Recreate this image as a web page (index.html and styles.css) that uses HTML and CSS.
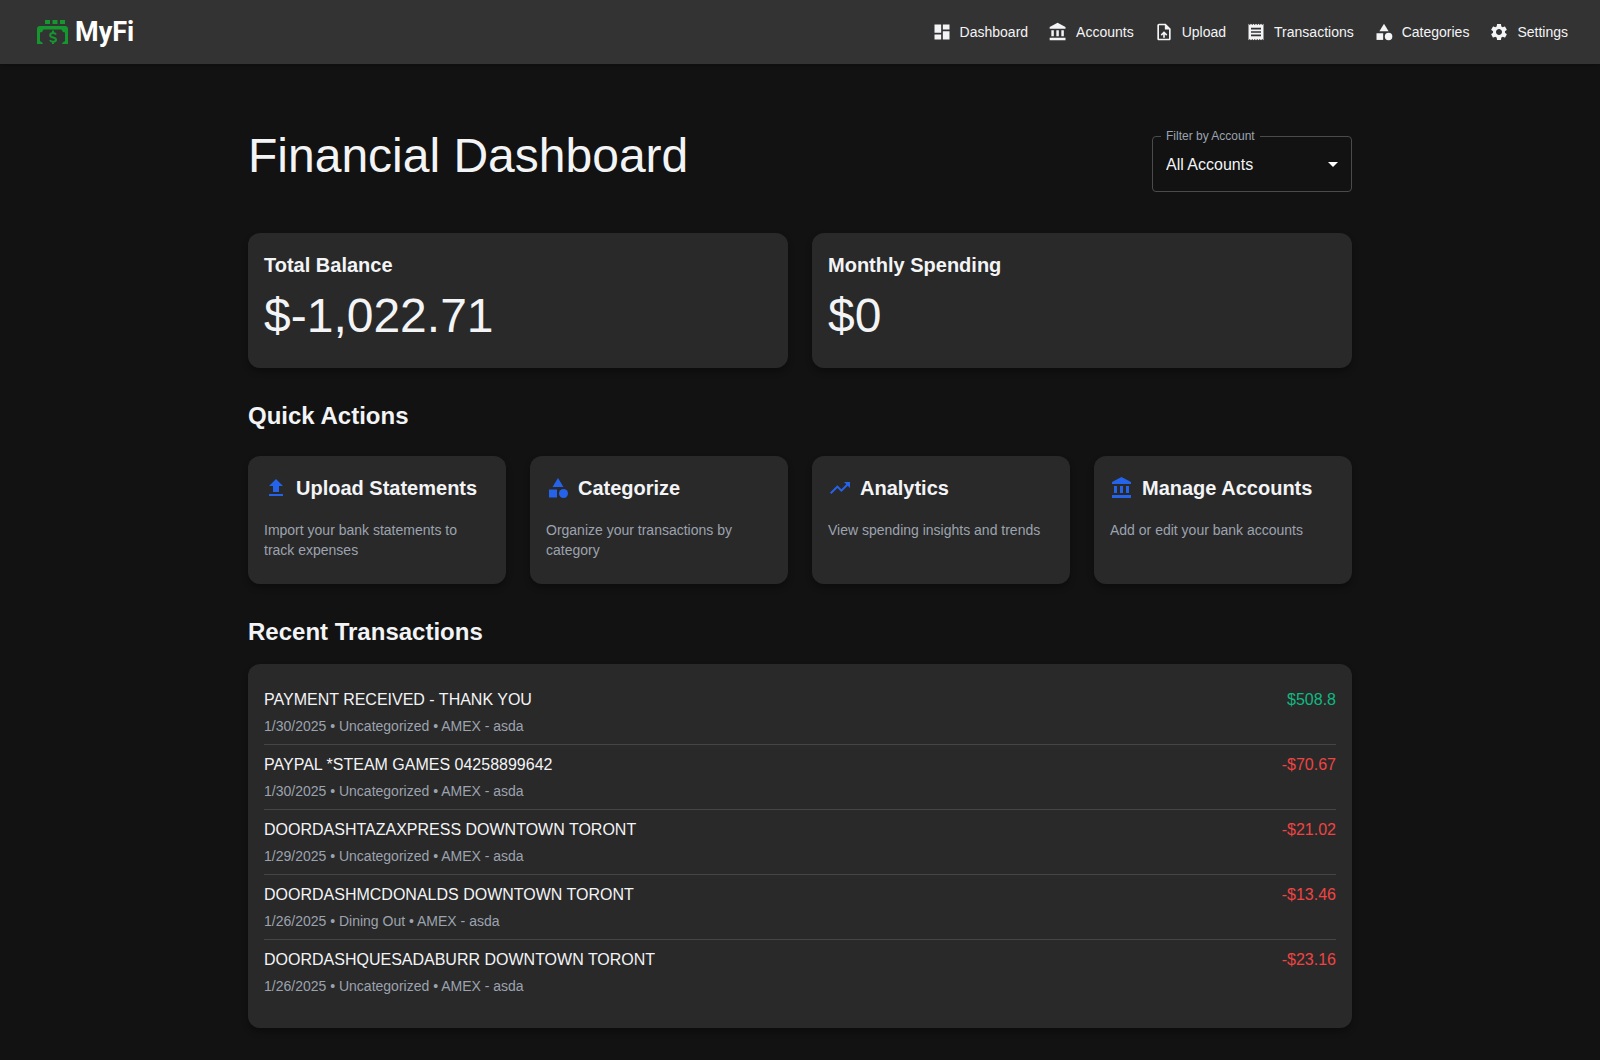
FILE: index.html
```html
<!DOCTYPE html>
<html lang="en">
<head>
<meta charset="utf-8">
<meta name="viewport" content="width=device-width, initial-scale=1">
<title>MyFi – Dashboard</title>
<link rel="stylesheet" href="styles.css">
</head>
<body>
<header class="topbar">
  <a class="logo" href="#" aria-label="MyFi home">
    <svg class="logo-mark" viewBox="0 0 32 24" aria-hidden="true">
      <path d="M8 0h5v4H8zM15.500 0h5v4h-5zM23 0h5v4h-5z"/>
      <path d="M3 6h25q3 0 3 3v15h-6q0-1.500 3-3v-8.500q-3-.5-3.500-3h-18q-.5 2.500-3.500 3V21q3 1.500 3 3H0V9q0-3 3-3z"/>
      <path class="logo-dollar" d="M19 14.500q-.8-1.400-3-1.400-2.800 0-2.800 2.100 0 1.700 2.800 2.200 3 .5 3 2.300 0 2-3 2-2.200 0-3-1.600M16 10.500v2.500M16 21.500V24"/>
    </svg>
    <span class="logo-text">MyFi</span>
  </a>
  <nav class="nav" aria-label="Main">
    <a class="nav-link" href="#"><svg class="nav-icon" viewBox="0 0 24 24" aria-hidden="true"><path d="M3 13h8V3H3v10zm0 8h8v-6H3v6zm10 0h8V11h-8v10zm0-18v6h8V3h-8z"/></svg>Dashboard</a>
    <a class="nav-link" href="#"><svg class="nav-icon" viewBox="0 0 24 24" aria-hidden="true"><path d="M4 10v7h3v-7H4zm6 0v7h3v-7h-3zM2 22h19v-3H2v3zm14-12v7h3v-7h-3zm-4.500-9L2 6v2h19V6l-9.500-5z"/></svg>Accounts</a>
    <a class="nav-link" href="#"><svg class="nav-icon" viewBox="0 0 24 24" aria-hidden="true"><path d="M14 2H6c-1.100 0-1.990.9-1.990 2L4 20c0 1.100.89 2 1.990 2H18c1.100 0 2-.9 2-2V8l-6-6zm4 18H6V4h7v5h5v11zM8 15.010l1.410 1.410L11 14.840V19h2v-4.160l1.590 1.590L16 15.010 12.010 11z"/></svg>Upload</a>
    <a class="nav-link" href="#"><svg class="nav-icon" viewBox="0 0 24 24" aria-hidden="true"><path d="M18 17H6v-2h12v2zm0-4H6v-2h12v2zm0-4H6V7h12v2zM3 22l1.500-1.500L6 22l1.500-1.500L9 22l1.500-1.500L12 22l1.500-1.500L15 22l1.500-1.500L18 22l1.500-1.500L21 22V2l-1.500 1.500L18 2l-1.500 1.500L15 2l-1.500 1.500L12 2l-1.500 1.500L9 2 7.500 3.500 6 2 4.500 3.500 3 2v20z"/></svg>Transactions</a>
    <a class="nav-link" href="#"><svg class="nav-icon" viewBox="0 0 24 24" aria-hidden="true"><path d="m12 2-5.500 9h11z"/><circle cx="17.500" cy="17.500" r="4.500"/><path d="M3 13.500h8v8H3z"/></svg>Categories</a>
    <a class="nav-link" href="#"><svg class="nav-icon" viewBox="0 0 24 24" aria-hidden="true"><path d="M19.140 12.940c.04-.3.06-.61.06-.94 0-.32-.02-.64-.07-.94l2.030-1.580c.18-.14.23-.41.12-.61l-1.920-3.320c-.12-.22-.37-.29-.59-.22l-2.390.96c-.5-.38-1.030-.7-1.620-.94l-.36-2.540c-.04-.24-.24-.41-.48-.41h-3.840c-.24 0-.43.17-.47.41l-.36 2.540c-.59.24-1.130.57-1.620.94l-2.390-.96c-.22-.08-.47 0-.59.22L2.740 8.870c-.12.21-.08.47.12.61l2.030 1.580c-.05.3-.09.63-.09.94s.02.64.07.94l-2.030 1.580c-.18.14-.23.41-.12.61l1.920 3.320c.12.22.37.29.59.22l2.390-.96c.5.38 1.030.7 1.620.94l.36 2.540c.05.24.24.41.48.41h3.840c.24 0 .44-.17.47-.41l.36-2.540c.59-.24 1.130-.56 1.620-.94l2.390.96c.22.08.47 0 .59-.22l1.920-3.320c.12-.22.07-.47-.12-.61l-2.010-1.580zM12 15.600c-1.980 0-3.600-1.620-3.600-3.600s1.620-3.600 3.600-3.600 3.600 1.620 3.600 3.600-1.620 3.600-3.600 3.600z"/></svg>Settings</a>
  </nav>
</header>

<main class="page">
  <div class="page-head">
    <h1 class="display page-title">Financial Dashboard</h1>
    <fieldset class="field">
      <legend class="field-legend"><label for="account">Filter by Account</label></legend>
      <select class="field-select" id="account"><option>All Accounts</option></select>
      <svg class="field-arrow" viewBox="0 0 24 24" aria-hidden="true"><path d="m7 10 5 5 5-5z"/></svg>
    </fieldset>
  </div>

  <section class="grid grid-two" aria-label="Summary">
    <article class="card">
      <h2 class="card-title stat-title">Total Balance</h2>
      <p class="display">$-1,022.71</p>
    </article>
    <article class="card">
      <h2 class="card-title stat-title">Monthly Spending</h2>
      <p class="display">$0</p>
    </article>
  </section>

  <h2 class="section-title actions-title">Quick Actions</h2>
  <section class="grid grid-four" aria-label="Quick Actions">
    <a class="card" href="#">
      <div class="action-head"><svg class="action-icon" viewBox="0 0 24 24" aria-hidden="true"><path d="M5 20h14v-2H5v2zm0-10h4v6h6v-6h4l-7-7-7 7z"/></svg><h3 class="card-title">Upload Statements</h3></div>
      <p class="muted">Import your bank statements to track expenses</p>
    </a>
    <a class="card" href="#">
      <div class="action-head"><svg class="action-icon" viewBox="0 0 24 24" aria-hidden="true"><path d="m12 2-5.500 9h11z"/><circle cx="17.500" cy="17.500" r="4.500"/><path d="M3 13.500h8v8H3z"/></svg><h3 class="card-title">Categorize</h3></div>
      <p class="muted">Organize your transactions by category</p>
    </a>
    <a class="card" href="#">
      <div class="action-head"><svg class="action-icon" viewBox="0 0 24 24" aria-hidden="true"><path d="m16 6 2.290 2.290-4.880 4.880-4-4L2 16.590 3.410 18l6-6 4 4 6.300-6.290L22 12V6z"/></svg><h3 class="card-title">Analytics</h3></div>
      <p class="muted">View spending insights and trends</p>
    </a>
    <a class="card" href="#">
      <div class="action-head"><svg class="action-icon" viewBox="0 0 24 24" aria-hidden="true"><path d="M4 10v7h3v-7H4zm6 0v7h3v-7h-3zM2 22h19v-3H2v3zm14-12v7h3v-7h-3zm-4.500-9L2 6v2h19V6l-9.500-5z"/></svg><h3 class="card-title">Manage Accounts</h3></div>
      <p class="muted">Add or edit your bank accounts</p>
    </a>
  </section>

  <h2 class="section-title recent-title">Recent Transactions</h2>
  <section class="card" aria-label="Recent Transactions">
    <ul class="tx-list">
      <li class="tx"><div class="tx-info"><p class="tx-name">PAYMENT RECEIVED - THANK YOU</p><p class="muted">1/30/2025 • Uncategorized • AMEX - asda</p></div><span class="amount amount-in">$508.8</span></li>
      <li class="tx"><div class="tx-info"><p class="tx-name">PAYPAL *STEAM GAMES 04258899642</p><p class="muted">1/30/2025 • Uncategorized • AMEX - asda</p></div><span class="amount">-$70.67</span></li>
      <li class="tx"><div class="tx-info"><p class="tx-name">DOORDASHTAZAXPRESS DOWNTOWN TORONT</p><p class="muted">1/29/2025 • Uncategorized • AMEX - asda</p></div><span class="amount">-$21.02</span></li>
      <li class="tx"><div class="tx-info"><p class="tx-name">DOORDASHMCDONALDS DOWNTOWN TORONT</p><p class="muted">1/26/2025 • Dining Out • AMEX - asda</p></div><span class="amount">-$13.46</span></li>
      <li class="tx"><div class="tx-info"><p class="tx-name">DOORDASHQUESADABURR DOWNTOWN TORONT</p><p class="muted">1/26/2025 • Uncategorized • AMEX - asda</p></div><span class="amount">-$23.16</span></li>
    </ul>
  </section>
</main>
</body>
</html>
```
FILE: styles.css
```css
*, *::before, *::after { box-sizing: border-box; }

body {
  margin: 0;
  background: #121212;
  color: #f3f4f6;
  font-family: "Liberation Sans", Arial, sans-serif;
  font-size: 16px;
  line-height: 24px;
}

h1, h2, h3, p, ul { margin: 0; padding: 0; }
a { color: inherit; text-decoration: none; }
svg { display: block; flex: none; fill: currentColor; }

/* Top bar */
.topbar {
  display: flex;
  align-items: center;
  justify-content: space-between;
  min-height: 64px;
  padding: 0 32px 0 37px;
  background: #333;
  box-shadow: 0 2px 4px rgba(0, 0, 0, .2);
}

.logo {
  display: flex;
  gap: 6px;
  color: #fff;
}
.logo-mark { width: 32px; height: 24px; color: #16962f; }
.logo-dollar { fill: none; stroke: currentColor; stroke-width: 2; }
.logo-text {
  font-family: Roboto, sans-serif;
  font-size: 27px;
  font-weight: 700;
  line-height: 24px;
}

.nav { display: flex; gap: 20px; }
.nav-link {
  display: flex;
  align-items: center;
  gap: 8px;
  font-size: 14px;
}
.nav-icon { width: 20px; height: 20px; }

/* Page */
.page {
  max-width: 1152px;
  margin: 0 auto;
  padding: 64px 24px 32px;
}

.display { font-size: 48px; font-weight: 400; line-height: 56px; }

.page-head {
  display: flex;
  align-items: center;
  justify-content: space-between;
  margin-bottom: 32px;
}
.page-title { margin-bottom: 17px; }

/* Outlined select with the label set into its border */
.field {
  position: relative;
  width: 200px;
  height: 62px;
  margin: 0 0 7px;
  padding: 0;
  border: 1px solid #4b4b4b;
  border-radius: 4px;
}
.field-legend {
  margin-left: 8px;
  padding: 0 5px;
  color: #9ca3af;
  font-size: 12px;
  line-height: 12px;
}
.field-legend label { display: block; }
.field-select {
  display: block;
  width: 100%;
  height: 46px;
  padding: 0 32px 0 13px;
  border: 0;
  background: transparent;
  color: inherit;
  font: inherit;
  appearance: none;
}
.field-select option { background: #292929; }
.field-arrow {
  position: absolute;
  top: 10px;
  right: 6px;
  width: 24px;
  height: 24px;
  color: #fff;
  pointer-events: none;
}

/* Cards */
.grid { display: grid; gap: 24px; }
.grid-two { grid-template-columns: repeat(2, minmax(0, 1fr)); }
.grid-four { grid-template-columns: repeat(4, minmax(0, 1fr)); }

.card {
  padding: 16px 16px 24px;
  border-radius: 12px;
  background: #292929;
  box-shadow: 0 4px 6px rgba(0, 0, 0, .3);
}
.card-title { font-size: 20px; font-weight: 700; line-height: 32px; }
.stat-title { margin-bottom: 7px; }

.section-title { margin-top: 32px; font-size: 24px; font-weight: 700; line-height: 32px; }
.actions-title { margin-bottom: 24px; }
.recent-title { margin-bottom: 16px; }

.action-head {
  display: flex;
  align-items: center;
  gap: 8px;
  margin-bottom: 16px;
}
.action-icon { width: 24px; height: 24px; color: #2563eb; }

.muted { color: #9ca3af; font-size: 14px; line-height: 20px; }

/* Transactions */
.tx-list { list-style: none; }
.tx {
  display: flex;
  justify-content: space-between;
  gap: 16px;
  padding: 8px 0;
}
.tx + .tx { border-top: 1px solid #454545; }
.tx-name { margin-bottom: 4px; }
.amount { color: #ef4444; }
.amount-in { color: #10b981; }
```
